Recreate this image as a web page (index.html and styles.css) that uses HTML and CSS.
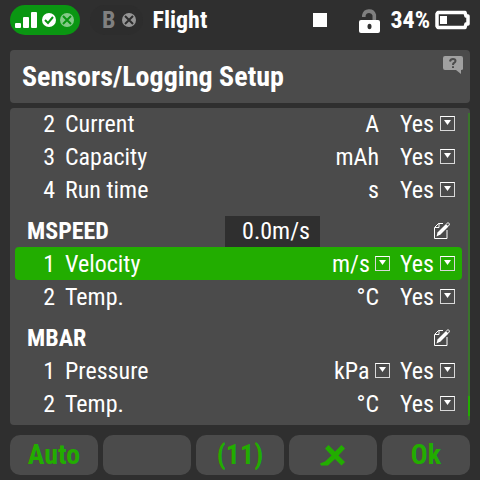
FILE: index.html
```html
<!DOCTYPE html>
<html lang="en">
<head>
    <meta charset="UTF-8">
    <meta name="viewport" content="width=device-width, initial-scale=1.0">
    <title>Sensors/Logging Setup</title>
    <link rel="stylesheet" href="styles.css">
</head>
<body>
    <header class="status-bar">
        <div class="rx rx-on">
            <svg width="60" height="18" viewBox="0 0 60 18">
                <g fill="#fff">
                    <rect x="0" y="13" width="6" height="5" rx="1"/>
                    <rect x="8" y="7" width="6" height="11" rx="1"/>
                    <rect x="16" y="2" width="6" height="16" rx="1"/>
                    <circle cx="34" cy="10" r="7"/>
                </g>
                <path d="M30 10l3 3 5-6" fill="none" stroke="#0a9612" stroke-width="2"/>
                <circle cx="52" cy="10" r="7" fill="#84ca88"/>
                <path d="M48 6l8 8M56 6l-8 8" stroke="#0a9612" stroke-width="2"/>
            </svg>
        </div>
        <div class="rx rx-off">
            <span>B</span>
            <svg width="14" height="14" viewBox="0 0 14 14">
                <circle cx="7" cy="7" r="7" fill="#969696"/>
                <path d="M3 3l8 8M11 3l-8 8" stroke="#2d2d2d" stroke-width="2"/>
            </svg>
        </div>
        <span class="model-name">Flight</span>
        <span class="stop"></span>
        <svg class="lock" width="21" height="25" viewBox="0 0 21 25">
            <path d="M4.800 9V7.500A5.400 5.400 0 0 1 15.300 7V13" fill="none" stroke="#808080" stroke-width="3.600"/>
            <rect x="0" y="12" width="21" height="13" rx="2" fill="#fff"/>
            <ellipse cx="10.500" cy="18.500" rx="2" ry="2.800" fill="#2f2f2f"/>
        </svg>
        <span class="percent">34%</span>
        <svg width="35" height="20" viewBox="0 0 35 20">
            <path d="M3 2.500H30L31 6H33V14H31L30 17.500H3L2 16V4Z" fill="none" stroke="#fff" stroke-width="3.500" stroke-linejoin="round"/>
            <rect x="5" y="6" width="7" height="8" fill="#fff"/>
        </svg>
    </header>

    <div class="title-panel">
        <h1>Sensors/Logging Setup</h1>
        <svg class="help" width="20" height="18" viewBox="0 0 20 18">
            <path d="M2 0H18Q20 0 20 2V13Q20 14 18 14V18L13 14H2Q0 14 0 12V2Q0 0 2 0Z" fill="#a0a0a0"/>
            <path d="M7 5.500Q7.500 3 10 3Q12.500 3 12.500 5Q12.500 6 11 7Q10 7.500 10 9M10 10.200V12" fill="none" stroke="#4b4b4b" stroke-width="2"/>
        </svg>
    </div>

    <main class="list">
        <div class="row">
            <span class="index">2</span><span class="name">Current</span>
            <span class="unit">A</span>
            <span class="dropdown"><select aria-label="Log current"><option>Yes</option></select></span>
        </div>
        <div class="row">
            <span class="index">3</span><span class="name">Capacity</span>
            <span class="unit">mAh</span>
            <span class="dropdown"><select aria-label="Log capacity"><option>Yes</option></select></span>
        </div>
        <div class="row">
            <span class="index">4</span><span class="name">Run time</span>
            <span class="unit">s</span>
            <span class="dropdown"><select aria-label="Log run time"><option>Yes</option></select></span>
        </div>

        <div class="row sensor">
            <h2>MSPEED</h2>
            <span class="value">0.0m/s</span>
            <svg class="edit" width="16" height="17" viewBox="0 0 16 17">
                <path d="M9 1.500H4.500L0.500 5.500V16.500H13V8M1 5.500H5V1" fill="none" stroke="#fff"/>
                <path d="M2.500 14.500L3.500 10.500L12 2L14.500 4.500L6.500 12.500Z" fill="#fff"/>
                <path d="M12.500 2L14 0.500L15.500 2L14.500 4" fill="none" stroke="#fff"/>
            </svg>
        </div>
        <div class="row selected">
            <span class="index">1</span><span class="name">Velocity</span>
            <span class="dropdown"><select aria-label="Velocity unit"><option>m/s</option></select></span>
            <span class="dropdown"><select aria-label="Log velocity"><option>Yes</option></select></span>
        </div>
        <div class="row">
            <span class="index">2</span><span class="name">Temp.</span>
            <span class="unit">°C</span>
            <span class="dropdown"><select aria-label="Log MSPEED temperature"><option>Yes</option></select></span>
        </div>

        <div class="row sensor">
            <h2>MBAR</h2>
            <svg class="edit" width="16" height="17" viewBox="0 0 16 17">
                <path d="M9 1.500H4.500L0.500 5.500V16.500H13V8M1 5.500H5V1" fill="none" stroke="#fff"/>
                <path d="M2.500 14.500L3.500 10.500L12 2L14.500 4.500L6.500 12.500Z" fill="#fff"/>
                <path d="M12.500 2L14 0.500L15.500 2L14.500 4" fill="none" stroke="#fff"/>
            </svg>
        </div>
        <div class="row">
            <span class="index">1</span><span class="name">Pressure</span>
            <span class="dropdown"><select aria-label="Pressure unit"><option>kPa</option></select></span>
            <span class="dropdown"><select aria-label="Log pressure"><option>Yes</option></select></span>
        </div>
        <div class="row">
            <span class="index">2</span><span class="name">Temp.</span>
            <span class="unit">°C</span>
            <span class="dropdown"><select aria-label="Log MBAR temperature"><option>Yes</option></select></span>
        </div>
        <div class="scrollbar"><div class="thumb"></div></div>
    </main>

    <footer class="keys">
        <button>Auto</button>
        <button aria-label="Empty"></button>
        <button>(11)</button>
        <button aria-label="Tools">
            <svg width="26" height="21" viewBox="0 0 26 21">
                <path d="M5 3.500L8.500 0L15 6.500L21.500 0L25 3.500L18.500 10.500L25 17L21.500 20.500L15 14L8 20.500H1L0 18.500L5 16.500L11.500 10.500Z" fill="#22ad00"/>
            </svg>
        </button>
        <button>Ok</button>
    </footer>
</body>
</html>
```
FILE: styles.css
```css
*,
*::before,
*::after {
    margin: 0;
    padding: 0;
    box-sizing: border-box;
}

body {
    display: flex;
    flex-direction: column;
    height: 100vh;
    padding: 5px 10px;
    background-color: #2f2f2f;
    color: #fff;
    font-family: 'Roboto Condensed', Roboto, sans-serif;
    font-size: 24px;
    line-height: 30px;
}

/* status bar */
.status-bar {
    display: flex;
    align-items: center;
    height: 30px;
    margin-bottom: 15px;
    font-weight: bold;
}

.rx {
    display: flex;
    align-items: center;
    height: 30px;
    border-radius: 15px;
}

.rx-on {
    padding: 0 5px;
    background-color: #0a9612;
}

.rx-on svg {
    margin-bottom: 2px;
}

.rx-off {
    gap: 7px;
    margin-left: 10px;
    padding: 0 7px 0 12px;
    background-color: #2d2d2d;
    color: #808080;
}

.model-name {
    margin-left: 9px;
}

.stop {
    width: 14px;
    height: 14px;
    margin-left: auto;
    background-color: #fff;
}

.lock {
    margin: 0 10px 0 32px;
}

.percent {
    margin-right: 5px;
}

/* panels */
.title-panel {
    display: flex;
    justify-content: space-between;
    height: 53px;
    padding: 6px 7px 0 12px;
    border-radius: 4px;
    background-color: #4b4b4b;
}

h1 {
    font-size: 28px;
    line-height: 42px;
}

.list {
    position: relative;
    display: flex;
    flex: 1;
    flex-direction: column;
    justify-content: flex-end;
    min-height: 0;
    margin: 5px 0 10px;
    padding: 0 8px 5px 5px;
    overflow: hidden;
    border-radius: 4px;
    background-color: #4b4b4b;
}

.row {
    display: flex;
    flex-shrink: 0;
    align-items: center;
    height: 33px;
    padding: 0 7px 0 12px;
    border-radius: 4px;
}

.selected {
    background-color: #22ad00;
}

.index {
    width: 28px;
    text-align: right;
}

.name {
    flex: 1;
    margin-left: 10px;
}

.unit {
    margin-right: 21px;
}

.dropdown {
    display: grid;
    align-items: center;
}

.dropdown + .dropdown {
    margin-left: 10px;
}

.dropdown select {
    grid-area: 1 / 1;
    padding-right: 20px;
    appearance: none;
    border: none;
    background: none;
    color: inherit;
    font: inherit;
}

.dropdown::before {
    grid-area: 1 / 1;
    justify-self: end;
    width: 15px;
    height: 15px;
    border: 1px solid #d8d8d8;
    border-top-color: #fff;
    content: '';
    pointer-events: none;
}

.dropdown::after {
    grid-area: 1 / 1;
    justify-self: end;
    width: 7px;
    height: 5px;
    margin: 0 4px 2px 0;
    background-color: #fff;
    clip-path: polygon(0 0, 100% 0, 50% 100%);
    content: '';
    pointer-events: none;
}

.sensor {
    margin-top: 8px;
}

h2 {
    width: 198px;
    font-size: 24px;
    line-height: 30px;
}

.value {
    align-self: flex-end;
    width: 95px;
    padding: 0 10px 1px 0;
    background-color: #2f2f2f;
    text-align: right;
}

.edit {
    margin: 0 5px 0 auto;
}

.scrollbar {
    position: absolute;
    top: 5px;
    right: 0;
    bottom: 5px;
    width: 2px;
    background-color: #3a742c;
}

.thumb {
    position: absolute;
    bottom: 4px;
    width: 2px;
    height: 20px;
    background-color: #22ad00;
}

/* soft keys */
.keys {
    display: grid;
    grid-template-columns: repeat(5, 1fr);
    gap: 5px;
}

.keys button {
    display: flex;
    align-items: center;
    justify-content: center;
    height: 40px;
    border: none;
    border-radius: 10px;
    background-color: #4b4b4b;
    color: #22ad00;
    font: inherit;
    font-size: 28px;
    font-weight: bold;
}
```
